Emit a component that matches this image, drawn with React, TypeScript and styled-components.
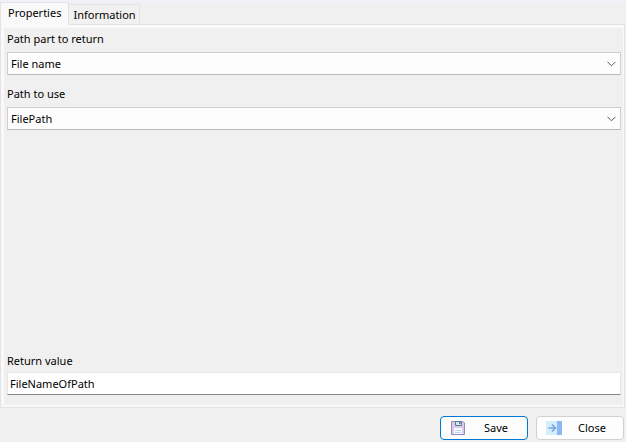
import React from "react";
import styled, { createGlobalStyle } from "styled-components";

const GlobalStyle = createGlobalStyle`
  * { box-sizing: border-box; }
  html, body, #root { height: 100%; }
  body {
    margin: 0;
    background: #f0f0f0;
    color: #000;
    font: 11px/16px "Segoe UI", "Noto Sans", "Open Sans", sans-serif;
  }
  button, input, select { font: inherit; color: inherit; }
`;

const Dialog = styled.form`
  display: flex;
  flex-direction: column;
  min-height: 100%;
  border-top: 2px solid #eff2f8;
`;

const TabBar = styled.div`
  display: flex;
  align-items: flex-end;
  height: 22px;
`;

const Tab = styled.button<{ $active?: boolean }>`
  height: ${(p) => (p.$active ? "23px" : "20px")};
  margin-bottom: ${(p) => (p.$active ? "-1px" : "0")};
  padding: ${(p) => (p.$active ? "0 7px 2px" : "0 3px 0 4px")};
  border: 1px solid #e3e3e3;
  border-bottom: 0;
  border-left-width: ${(p) => (p.$active ? "1px" : "0")};
  background: ${(p) => (p.$active ? "#f9f9f9" : "#f1f1f1")};
  line-height: 16px;
  white-space: nowrap;
  z-index: ${(p) => (p.$active ? 1 : 0)};
`;

const Panel = styled.section`
  flex: 1;
  display: flex;
  margin-right: 1px;
  padding: 3px 1px 2px 3px;
  border: 1px solid #e3e3e3;
  background: #f9f9f9;
`;

const Page = styled.div`
  flex: 1;
  display: flex;
  flex-direction: column;
  gap: 11px;
  padding: 3px 2px 10px 3px;
  background: #f0f0f0;
`;

const Field = styled.div<{ $bottom?: boolean }>`
  display: flex;
  flex-direction: column;
  gap: ${(p) => (p.$bottom ? "3px" : "5px")};
  margin-top: ${(p) => (p.$bottom ? "auto" : "0")};
`;

const SelectFrame = styled.div`
  display: grid;
  align-items: center;

  > * { grid-area: 1 / 1; }
  > svg {
    justify-self: end;
    margin-right: 5px;
    pointer-events: none;
  }
`;

const Select = styled.select`
  appearance: none;
  width: 100%;
  height: 23px;
  padding: 0 20px 0 3px;
  border: 1px solid #cfcfcf;
  border-bottom-color: #b9b9b9;
  border-radius: 1px;
  background: #fdfdfd;
`;

const TextInput = styled.input`
  height: 23px;
  padding: 0 2px 1px;
  border: 1px solid #e8e8e8;
  border-bottom-color: #868686;
  background: #fff;
`;

const Footer = styled.footer`
  display: flex;
  justify-content: flex-end;
  gap: 8px;
  padding: 8px 2px 2px;
`;

const ActionButton = styled.button<{ $primary?: boolean }>`
  display: flex;
  align-items: center;
  width: 88px;
  height: 24px;
  padding: 0 9px;
  border: 1px solid ${(p) => (p.$primary ? "#0078d4" : "#d0d0d0")};
  border-radius: 4px;
  background: #fdfdfd;

  > span {
    flex: 1;
    padding-left: 8px;
    text-align: center;
  }
`;

const Chevron = () => (
  <svg width="9" height="6" viewBox="0 0 9 6" fill="none" stroke="#555" aria-hidden="true">
    <path d="M.5 .8 4.5 4.8 8.5 .8" />
  </svg>
);

const SaveIcon = () => (
  <svg width="16" height="16" viewBox="0 0 16 16" aria-hidden="true">
    <path d="M1.5 1.5h11.5l1.5 1.5v11.5h-13z" fill="#dcc9ec" stroke="#9c87bb" />
    <path d="M5.5 1.5h6v4h-6z" fill="#d5e6ee" stroke="#5f7d91" />
    <path d="M9 2h1.5v2H9z" fill="#5f7d91" />
    <path d="M4 8h8v6H4z" fill="#fafdff" />
    <path d="M5 10.5h6M5 12.5h6" stroke="#acd9f5" />
  </svg>
);

const CloseIcon = () => (
  <svg width="16" height="16" viewBox="0 0 16 16" aria-hidden="true">
    <rect y="1" width="16" height="14" rx="1" fill="#d6edfd" />
    <path d="M11 1h4a1 1 0 0 1 1 1v12a1 1 0 0 1-1 1h-4z" fill="#8ab8f2" />
    <path d="M2.5 8h7M6 4.5 9.5 8 6 11.5" fill="none" stroke="#75a5df" strokeWidth="1.6" />
  </svg>
);

function SelectField({ id, label, value }: { id: string; label: string; value: string }) {
  return (
    <Field>
      <label htmlFor={id}>{label}</label>
      <SelectFrame>
        <Select id={id} defaultValue={value}>
          <option>{value}</option>
        </Select>
        <Chevron />
      </SelectFrame>
    </Field>
  );
}

export default function App() {
  return (
    <>
      <GlobalStyle />
      <Dialog onSubmit={(e) => e.preventDefault()}>
        <TabBar role="tablist">
          <Tab type="button" role="tab" id="tab-properties" aria-selected="true" aria-controls="properties" $active>
            Properties
          </Tab>
          <Tab type="button" role="tab" aria-selected="false">
            Information
          </Tab>
        </TabBar>
        <Panel role="tabpanel" id="properties" aria-labelledby="tab-properties">
          <Page>
            <SelectField id="path-part" label="Path part to return" value="File name" />
            <SelectField id="path-source" label="Path to use" value="FilePath" />
            <Field $bottom>
              <label htmlFor="return-value">Return value</label>
              <TextInput id="return-value" type="text" defaultValue="FileNameOfPath" />
            </Field>
          </Page>
        </Panel>
        <Footer>
          <ActionButton type="submit" $primary>
            <SaveIcon />
            <span>Save</span>
          </ActionButton>
          <ActionButton type="button">
            <CloseIcon />
            <span>Close</span>
          </ActionButton>
        </Footer>
      </Dialog>
    </>
  );
}
